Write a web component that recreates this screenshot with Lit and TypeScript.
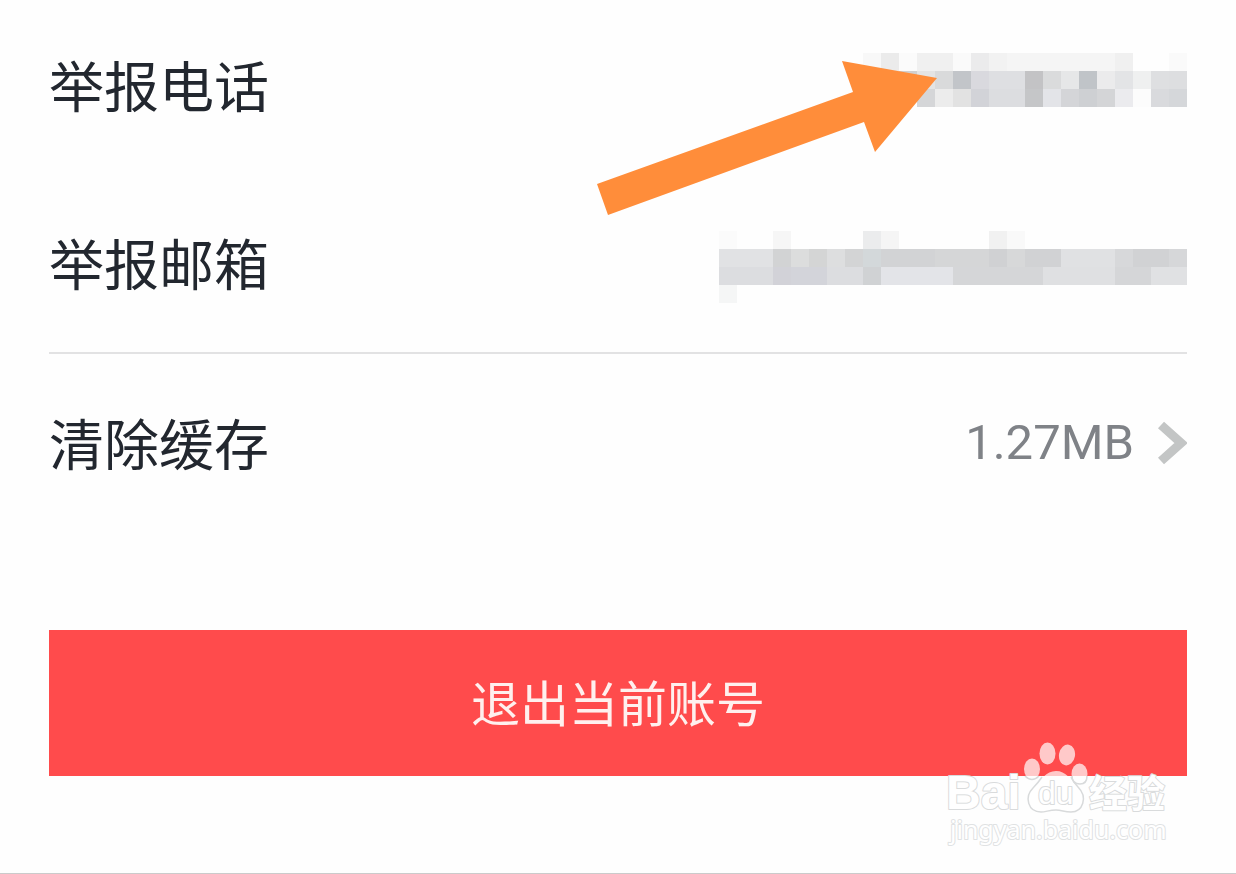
import { LitElement, html, svg, css } from "lit";
import { customElement, property } from "lit/decorators.js";

const CELL = 18;

// Each mosaic row is a list of [column, span, colour].
type Run = [number, number, string];

const PHONE: Run[][] = [
  [[0, 1, "#f8f8f8"], [1, 1, "#ebebeb"], [2, 1, "#fbfbfb"], [3, 2, "#f0f0f0"], [5, 1, "#fafafa"], [6, 1, "#ebebec"], [7, 1, "#f2f2f2"], [8, 6, "#f5f5f5"], [14, 1, "#f0f0f0"], [17, 1, "#fafafa"]],
  [[2, 1, "#d0d0d0"], [3, 1, "#e4e4e4"], [4, 1, "#d9dadb"], [5, 1, "#c2c5c9"], [6, 1, "#d9d9de"], [7, 2, "#dedfe2"], [9, 1, "#c3c3c5"], [10, 1, "#dadbdc"], [11, 1, "#e6e7e8"], [12, 1, "#c0c4c8"], [13, 1, "#ebebec"], [14, 1, "#e3e4e6"], [15, 1, "#eff0f0"], [16, 1, "#dedfe1"], [17, 1, "#dddee0"]],
  [[3, 1, "#d5d6d8"], [4, 1, "#ececec"], [5, 1, "#e2e2e2"], [6, 1, "#d2d3d8"], [7, 2, "#dcdde0"], [9, 1, "#c5c6c8"], [10, 1, "#e3e4e8"], [11, 1, "#d4d5d8"], [12, 1, "#ced0d3"], [13, 1, "#d4d5d7"], [14, 1, "#ebebee"], [15, 1, "#fcfcfc"], [16, 1, "#d9dadd"], [17, 1, "#d5d7da"]],
  [],
];

const EMAIL: Run[][] = [
  [[0, 1, "#fbfbfb"], [3, 1, "#f6f6f6"], [8, 1, "#ebeced"], [9, 1, "#f5f5f5"], [15, 1, "#f1f1f1"], [16, 1, "#f9f9f9"]],
  [[0, 3, "#e1e2e4"], [3, 1, "#d2d3d4"], [4, 1, "#dcdddd"], [5, 1, "#d4d5d5"], [6, 1, "#dddedf"], [7, 1, "#d3d4d5"], [8, 1, "#d3d8da"], [9, 3, "#d2d3d5"], [12, 3, "#d5d6d7"], [15, 1, "#d0d1d3"], [16, 1, "#d7d8d9"], [17, 2, "#d1d2d4"], [19, 3, "#e0e1e3"], [22, 1, "#d7d8da"], [23, 2, "#d1d2d4"], [25, 1, "#d6d7d9"]],
  [[0, 3, "#dcdde0"], [3, 1, "#d2d2d8"], [4, 2, "#d3d4da"], [6, 2, "#dcdde0"], [8, 1, "#d0d2d4"], [9, 4, "#e3e4e8"], [13, 5, "#d5d6d8"], [18, 4, "#dfe0e2"], [22, 2, "#d5d6d8"], [24, 2, "#e0e1e3"]],
  [[0, 1, "#f5f6f6"]],
];

@customElement("masked-value")
export class MaskedValue extends LitElement {
  @property({ attribute: false }) rows: Run[][] = [];
  @property({ type: Number }) columns = 1;

  static styles = css`
    :host { display: block; }
    .mosaic { display: block; }
  `;

  render() {
    const w = this.columns * CELL;
    const h = this.rows.length * CELL;
    return html`<svg class="mosaic" width=${w} height=${h} viewBox="0 0 ${w} ${h}" shape-rendering="crispEdges" aria-hidden="true">
      ${this.rows.map((row, y) =>
        row.map(([x, n, fill]) => svg`<rect x=${x * CELL} y=${y * CELL} width=${n * CELL} height=${CELL} fill=${fill}></rect>`)
      )}
    </svg>`;
  }
}

@customElement("app-root")
export class AppRoot extends LitElement {
  static styles = css`
    :host {
      display: block;
      position: relative;
      box-sizing: border-box;
      min-height: 100vh;
      padding: 0 49px;
      background: #fefefe;
      border-bottom: 1px solid #cbcbcb;
      color: #22272f;
      font-family: "Noto Sans CJK SC", sans-serif;
      overflow: hidden;
    }
    .row {
      display: flex;
      align-items: center;
      justify-content: space-between;
      box-sizing: border-box;
      width: 100%;
      height: 178px;
      padding: 0;
      border: 0;
      background: none;
      color: inherit;
      font: inherit;
      text-align: left;
    }
    .group {
      height: 352px;
      display: grid;
      align-content: end;
      border-bottom: 2px solid #e2e2e3;
    }
    .label { font-size: 55px; line-height: 80px; padding-bottom: 4px; }
    .masked { padding-top: 8px; }
    .value {
      display: flex;
      align-items: center;
      gap: 22px;
      color: #7f8287;
      font-family: Roboto, sans-serif;
      font-size: 49px;
      line-height: 64px;
    }
    .chevron { display: block; }
    .logout {
      display: block;
      width: 100%;
      height: 146px;
      margin: 98px 0 0;
      padding: 0 0 4px;
      border: 0;
      background: #ff4b4c;
      color: #fff0ee;
      font-family: inherit;
      font-size: 49px;
      line-height: 72px;
    }
    .arrow { position: absolute; top: 56px; right: 298px; }
    .watermark { position: absolute; top: 736px; right: 60px; }
    .latin { font-family: "Liberation Sans", sans-serif; font-weight: 700; }
    .thin { font-family: "Liberation Sans", sans-serif; }
    .site { font-family: "Noto Sans", sans-serif; }
    .han { font-family: "Noto Sans CJK SC", sans-serif; font-weight: 700; }
  `;

  render() {
    return html`
      <section class="group">
        <div class="row">
          <span class="label">举报电话</span>
          <masked-value class="masked" .rows=${PHONE} .columns=${18}></masked-value>
        </div>
        <div class="row">
          <span class="label">举报邮箱</span>
          <masked-value class="masked" .rows=${EMAIL} .columns=${26}></masked-value>
        </div>
      </section>
      <button class="row" type="button">
        <span class="label">清除缓存</span>
        <span class="value">
          1.27MB
          <svg class="chevron" width="31" height="44" viewBox="0 0 31 44" aria-hidden="true">
            <path d="M5 4 L25 22 L5 40" fill="none" stroke="#c3c5c5" stroke-width="9"></path>
          </svg>
        </span>
      </button>
      <button class="logout" type="button">退出当前账号</button>

      <svg class="arrow" width="344" height="164" viewBox="594 56 344 164" aria-hidden="true">
        <path d="M597 184 L853 92 L842 61 L937 78 L875 152 L864 122 L608 215 Z" fill="#ff8d3a"></path>
      </svg>

      <svg class="watermark" width="236" height="116" viewBox="940 736 236 116" role="img" aria-label="Baidu">
        <g fill="#fff" fill-opacity="0.7">
          <ellipse cx="1047.500" cy="753.500" rx="8" ry="11"></ellipse>
          <ellipse cx="1067" cy="755" rx="8" ry="10.500" transform="rotate(10 1067 755)"></ellipse>
          <ellipse cx="1032" cy="769" rx="8" ry="10.500"></ellipse>
          <ellipse cx="1079.500" cy="774" rx="8" ry="10.500"></ellipse>
          <path d="M1056 771 C1066 771 1070 779 1078 787 C1088 797 1083 812 1071 812 C1064 812 1062 810 1056 810 C1049 810 1046 812 1041 812 C1028 812 1024 797 1033 788 C1041 780 1046 771 1056 771 Z"></path>
        </g>
        <g fill="none" stroke="#d8dadb" stroke-width="1.500">
          <path d="M1071 777 C1073 781 1075 784 1078 787 C1088 797 1083 812 1071 812 C1064 812 1062 810 1056 810 C1049 810 1046 812 1041 812 C1028 812 1024 797 1033 788 C1036 785 1040 780 1042 777"></path>
          <path d="M1025 776 Q1032 783 1039 776 M1072 776 Q1072 784 1080 784 Q1087 784 1087 776"></path>
        </g>
        <g fill="#fff" stroke="#d9dbdc" stroke-width="2" paint-order="stroke" stroke-linejoin="round">
          <text class="latin" x="946" y="809" font-size="48">Bai</text>
          <text class="thin" x="1038" y="804" font-size="32">du</text>
          <text class="han" x="1089" y="807" font-size="38">经验</text>
          <text class="site" x="950" y="839" font-size="25" stroke="#e0e2e3">jingyan.baidu.com</text>
        </g>
      </svg>
    `;
  }
}
